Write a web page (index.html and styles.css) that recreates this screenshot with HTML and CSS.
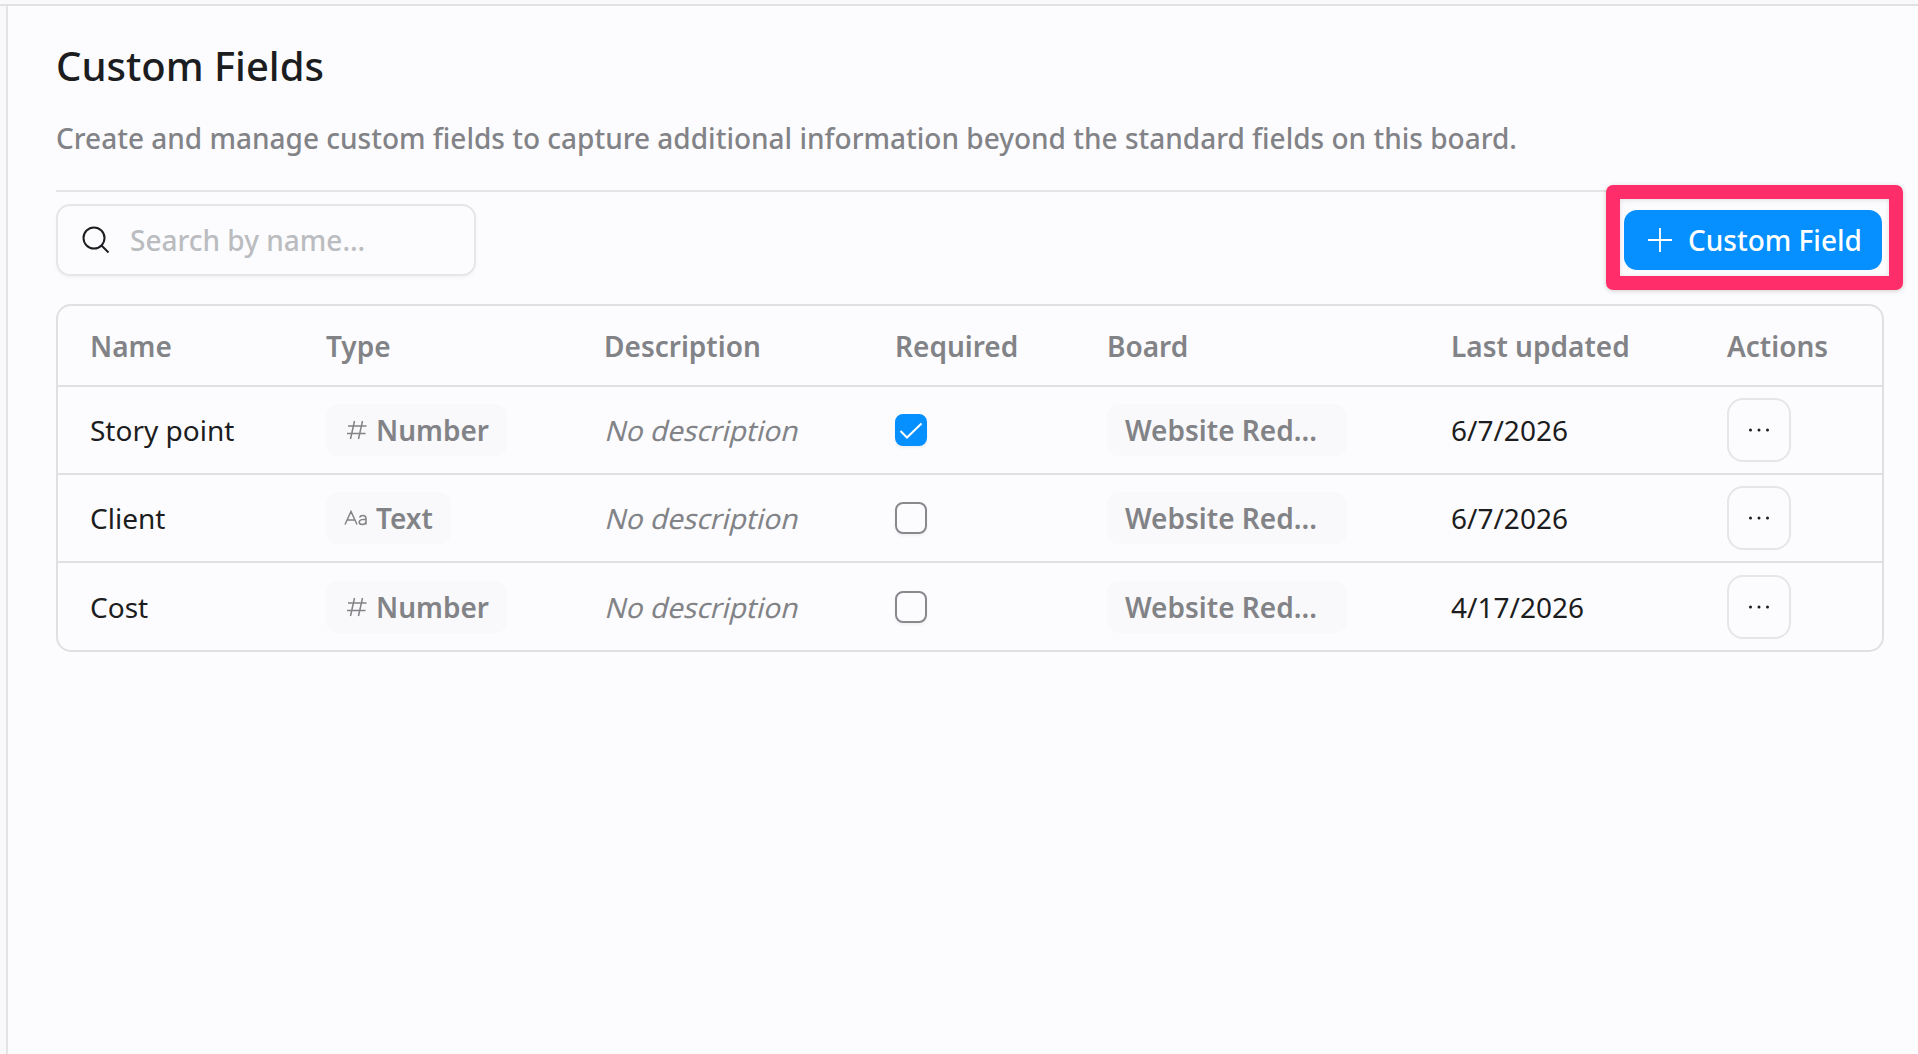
FILE: index.html
```html
<!DOCTYPE html>
<html lang="en">
<head>
<meta charset="utf-8">
<title>Custom Fields</title>
<link rel="stylesheet" href="styles.css">
</head>
<body>
<svg class="sprite" aria-hidden="true">
  <symbol id="hash" viewBox="0 0 22 22"><path d="M3 7h18.500M2 14.500h18.500M9.500 2l-4 18M17.500 2l-4 18"/></symbol>
  <symbol id="dots" viewBox="0 0 24 6"><circle cx="3.5" cy="3" r="1.5"/><circle cx="12" cy="3" r="1.5"/><circle cx="20.5" cy="3" r="1.5"/></symbol>
  <symbol id="letters" viewBox="0 0 24 16"><path d="M1 14.5 7 1.5l6 13M3.2 10h7.6M15.5 7.5c.6-1.300 1.700-2 3.200-2 2 0 3.300 1.100 3.300 3v6M22 9.300c-1.500 0-6.800-.2-6.800 2.700 0 1.500 1.200 2.500 3 2.500 2.200 0 3.800-1.300 3.800-3.200"/></symbol>
</svg>
<div class="app">
  <header class="topbar"></header>
  <div class="shell">
    <aside class="rail"></aside>
    <main class="content">
      <h1 class="title">Custom Fields</h1>
      <p class="subtitle">Create and manage custom fields to capture additional information beyond the standard fields on this board.</p>
      <div class="toolbar">
        <label class="search">
          <svg class="search-icon" viewBox="0 0 28 28"><circle cx="12" cy="12" r="10.500"/><path d="m19.500 19.500 7 7"/></svg>
          <input class="search-input" type="text" placeholder="Search by name...">
        </label>
        <div class="add-wrap">
          <button class="add-button">
            <svg class="plus-icon" viewBox="0 0 24 24"><path d="M12 0v24M0 12h24"/></svg>
            <span>Custom Field</span>
          </button>
          <div class="highlight"></div>
        </div>
      </div>
      <section class="table">
        <div class="row head">
          <div>Name</div><div>Type</div><div>Description</div><div>Required</div><div>Board</div><div>Last updated</div><div>Actions</div>
        </div>
        <div class="row">
          <div>Story point</div>
          <div><span class="chip type"><svg class="hash-icon"><use href="#hash"/></svg>Number</span></div>
          <div><span class="empty">No description</span></div>
          <div><span class="check checked"><svg class="tick" viewBox="0 0 24 17"><path d="M1.500 9 8 15.500 22.500 1.500"/></svg></span></div>
          <div><span class="chip board">Website Red...</span></div>
          <div>6/7/2026</div>
          <div><button class="more"><svg class="dots"><use href="#dots"/></svg></button></div>
        </div>
        <div class="row">
          <div>Client</div>
          <div><span class="chip type"><svg class="letters-icon"><use href="#letters"/></svg>Text</span></div>
          <div><span class="empty">No description</span></div>
          <div><span class="check"></span></div>
          <div><span class="chip board">Website Red...</span></div>
          <div>6/7/2026</div>
          <div><button class="more"><svg class="dots"><use href="#dots"/></svg></button></div>
        </div>
        <div class="row last">
          <div>Cost</div>
          <div><span class="chip type"><svg class="hash-icon"><use href="#hash"/></svg>Number</span></div>
          <div><span class="empty">No description</span></div>
          <div><span class="check"></span></div>
          <div><span class="chip board">Website Red...</span></div>
          <div>4/17/2026</div>
          <div><button class="more"><svg class="dots"><use href="#dots"/></svg></button></div>
        </div>
      </section>
    </main>
  </div>
</div>
</body>
</html>
```
FILE: styles.css
```css
* { box-sizing: border-box; }

body {
  margin: 0;
  background: #fcfcfe;
  color: #1c1d20;
  font: 400 28px/40px "Noto Sans", sans-serif;
  overflow: hidden;
}

.sprite { display: none; }

.app { display: flex; flex-direction: column; height: 100vh; }
.topbar { height: 6px; background: #f9f9fb; border-bottom: 2px solid #e2e2e5; }
.shell { display: flex; flex: 1; }
.rail { width: 8px; background: #f9f9fb; border-right: 2px solid #e4e4e7; }
.content { flex: 1; padding: 32px 34px 0 48px; }

.title { margin: 0; font-size: 40px; font-weight: 500; line-height: 56px; }

.subtitle {
  margin: 0;
  padding: 24px 0 32px;
  border-bottom: 2px solid #e4e4e7;
  color: #828387;
  font-weight: 500;
}

.toolbar {
  display: flex;
  align-items: center;
  justify-content: space-between;
  padding: 12px 2px 28px 0;
}

.search {
  display: flex;
  align-items: center;
  gap: 20px;
  width: 420px;
  height: 72px;
  padding: 0 24px;
  border: 2px solid #e6e6e9;
  border-radius: 14px;
  box-shadow: 0 2px 3px rgba(0, 0, 0, .04);
}
.search-icon { flex: none; width: 28px; height: 28px; fill: none; stroke: #1c1d20; stroke-width: 2; }
.search-input {
  min-width: 0;
  flex: 1;
  padding: 0;
  border: 0;
  outline: 0;
  background: none;
  font: inherit;
  font-weight: 500;
}
.search-input::placeholder { color: #bbbcc0; opacity: 1; }

.add-wrap { position: relative; }
.add-button {
  display: flex;
  align-items: center;
  gap: 16px;
  width: 258px;
  height: 60px;
  padding: 0 0 0 24px;
  border: 0;
  border-radius: 13px;
  background: #058fff;
  color: #fff;
  font: inherit;
  font-weight: 500;
  white-space: nowrap;
}
.plus-icon { flex: none; width: 24px; height: 24px; stroke: #fff; stroke-width: 1.800; }

/* Callout frame drawn over the button */
.highlight {
  position: absolute;
  inset: -25px -21px -20px -18px;
  border: 14px solid #ff2d69;
  border-radius: 7px;
  box-shadow: 0 1px 5px rgba(0, 0, 0, .18), inset 0 1px 5px rgba(0, 0, 0, .12);
  pointer-events: none;
}

.table { border: 2px solid #e0e0e3; border-radius: 15px; }
.row {
  display: grid;
  grid-template-columns: 236px 278px 291px 212px 344px 276px 1fr;
  align-items: center;
  height: 88px;
  padding-left: 32px;
  border-bottom: 2px solid #e0e0e3;
}
.row > div { display: flex; align-items: center; white-space: nowrap; }
.head { height: 81px; padding-top: 1px; color: #828387; font-weight: 600; }
.last { height: 87px; padding-top: 1px; border-bottom: 0; }

/* Slanted roman letterforms */
.empty { color: #828387; transform: skewX(-14deg); transform-origin: 0 31px; }

.chip {
  display: flex;
  align-items: center;
  height: 52px;
  border-radius: 12px;
  background: #f9f9fb;
  color: #828387;
  font-weight: 600;
}
.type { gap: 8px; padding: 0 18px; }
.board { width: 240px; padding-left: 18px; }
.hash-icon { width: 24px; height: 22px; fill: none; stroke: #828387; stroke-width: 1.500; }
.letters-icon { width: 24px; height: 16px; fill: none; stroke: #828387; stroke-width: 1.500; }

.check {
  display: flex;
  align-items: center;
  justify-content: center;
  width: 32px;
  height: 32px;
  border: 2px solid #88898d;
  border-radius: 8px;
  box-shadow: 0 2px 3px rgba(0, 0, 0, .05);
}
.checked { border-color: #058fff; background: #058fff; }
.tick { width: 24px; height: 17px; fill: none; stroke: #fff; stroke-width: 2; }

.more {
  display: flex;
  align-items: center;
  justify-content: center;
  width: 64px;
  height: 64px;
  padding: 0;
  border: 2px solid #e6e6e9;
  border-radius: 16px;
  background: none;
}
.dots { width: 24px; height: 6px; fill: #1c1d20; }
```
